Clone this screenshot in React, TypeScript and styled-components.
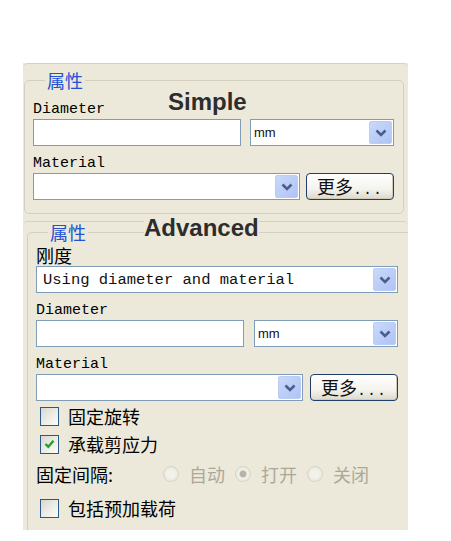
import styled, { createGlobalStyle } from 'styled-components';

const GlobalStyle = createGlobalStyle`
  html, body {
    margin: 0;
    padding: 0;
    background: #fff;
  }
  body {
    font-family: 'Noto Sans CJK SC', 'Liberation Sans', sans-serif;
    color: #000;
  }
`;

const beige = '#ece9da';

const Page = styled.div`
  width: 451px;
  height: 541px;
  padding: 63px 0 0 23px;
  box-sizing: border-box;
`;

const Panel = styled.div`
  width: 385px;
  background: ${beige};
`;

const Section = styled.div<{ $pad: number }>`
  position: relative;
  border-top: 1px solid #d6d2c1;
  border-radius: 5px 5px 0 0;
  padding-bottom: ${(p) => p.$pad}px;
`;

const SimpleGroup = styled.fieldset`
  margin: 7px 4px 0 1px;
  padding: 0 9px 13px 8px;
  border: 1px solid #d3d0bf;
  border-radius: 5px;
  min-width: 0;
`;

const AdvancedGroup = styled.fieldset`
  margin: 1px 0 0 4px;
  padding: 0 10px 8px 8px;
  border: 1px solid #d3d0bf;
  border-right: none;
  border-bottom: none;
  border-radius: 5px 0 0 0;
  min-width: 0;
`;

const Legend = styled.legend`
  margin-left: 12px;
  padding: 0 2px;
  font-size: 18px;
  line-height: 18px;
  color: #2352d4;
`;

const HeaderRow = styled.div`
  display: flex;
  align-items: flex-end;
  height: 30px;
`;

const Annotation = styled.span`
  font-family: 'Liberation Sans', Arial, sans-serif;
  font-weight: bold;
  font-size: 24px;
  line-height: 24px;
  color: #2d2d2d;
  background: ${beige};
`;

const SimpleTitle = styled(Annotation)`
  margin: 0 0 5px 63px;
`;

const AdvancedTitle = styled(Annotation)`
  position: absolute;
  top: -6px;
  left: 121px;
`;

const FieldLabel = styled.div<{ $gap: number }>`
  margin-top: ${(p) => p.$gap}px;
  font-family: 'Liberation Mono', monospace;
  font-size: 15px;
  line-height: 18px;
  color: #000;
  white-space: pre;
`;

const CjkLabel = styled.div`
  margin: 4px 0 1px;
  font-size: 18px;
  line-height: 20px;
  color: #000;
`;

const FieldRow = styled.div<{ $gap: number }>`
  display: flex;
  gap: ${(p) => p.$gap}px;
  height: 27px;
`;

const TextBox = styled.div`
  width: 208px;
  flex: none;
  box-sizing: border-box;
  border: 1px solid #7f9db9;
  background: #fff;
`;

const Select = styled.div<{ $mono?: boolean }>`
  flex: 1;
  display: flex;
  align-items: center;
  box-sizing: border-box;
  height: 27px;
  padding: 0 1px 0 ${(p) => (p.$mono ? 6 : 3)}px;
  border: 1px solid #7f9db9;
  background: #fff;
  font-family: ${(p) => (p.$mono ? "'Liberation Mono', monospace" : "'Liberation Sans', sans-serif")};
  font-size: ${(p) => (p.$mono ? 15.5 : 13)}px;
  color: #111;
  white-space: pre;
`;

const SelectText = styled.span`
  flex: 1;
  overflow: hidden;
`;

const DropButton = styled.span`
  width: 23px;
  height: 23px;
  flex: none;
  display: flex;
  align-items: center;
  justify-content: center;
  box-sizing: border-box;
  border: 1px solid #bccdf4;
  border-radius: 2px;
  background: linear-gradient(135deg, #c9d8fc, #afc4f4);
`;

const MoreButton = styled.button`
  width: 88px;
  flex: none;
  height: 27px;
  padding: 0;
  border: 1px solid #1f3f6a;
  border-radius: 4px;
  background: linear-gradient(#fff 0%, #f4f3ee 60%, #dcd9cc 100%);
  box-shadow: inset -1px -1px 0 #cfcbbb;
  font-family: 'Noto Sans CJK SC', sans-serif;
  font-size: 18px;
  line-height: 25px;
  color: #111;
`;

const Dots = styled.span`
  font-family: 'Liberation Mono', monospace;
  font-size: 15px;
  letter-spacing: 1px;
`;

const Options = styled.div`
  padding-top: 1px;
`;

const CheckRow = styled.label`
  display: flex;
  align-items: center;
  gap: 9px;
  height: 28px;
  padding-left: 4px;
  font-size: 18px;
  color: #000;
`;

const CheckBox = styled.span`
  width: 19px;
  height: 19px;
  box-sizing: border-box;
  flex: none;
  display: flex;
  align-items: center;
  justify-content: center;
  border: 1px solid #2a5a87;
  background: linear-gradient(135deg, #d7d6cf 0%, #eeede8 55%, #fbfbf9 100%);
`;

const RadioRow = styled.div`
  display: flex;
  align-items: center;
  height: 30px;
  margin: 1px 0 5px;
  font-size: 18px;
`;

const RadioLabel = styled.span`
  width: 127px;
  flex: none;
  color: #000;
`;

const RadioOption = styled.span`
  display: flex;
  align-items: center;
  gap: 10px;
  margin-right: 10px;
  color: #aca899;
`;

const RadioDot = styled.span<{ $on?: boolean }>`
  width: 16px;
  height: 16px;
  box-sizing: border-box;
  border-radius: 50%;
  border: 1px solid #d6d3c6;
  background: radial-gradient(circle, ${(p) => (p.$on ? '#b7b5aa 0, #b7b5aa 3px,' : '')} #f2f1ea 4px, #e3e1d6 100%);
`;

const Chevron = () => (
  <svg width="12" height="8" viewBox="0 0 12 8">
    <path d="M1.5 1.5 L6 6 L10.5 1.5" fill="none" stroke="#4b5d8a" strokeWidth="2.6" />
  </svg>
);

const Check = () => (
  <svg width="11" height="10" viewBox="0 0 11 10">
    <path d="M1.5 5 L4.3 7.8 L9.5 1.8" fill="none" stroke="#21a121" strokeWidth="2.4" />
  </svg>
);

const Dropdown = ({ text, mono }: { text?: string; mono?: boolean }) => (
  <Select $mono={mono}>
    <SelectText>{text}</SelectText>
    <DropButton>
      <Chevron />
    </DropButton>
  </Select>
);

const More = () => (
  <MoreButton>
    更多<Dots>...</Dots>
  </MoreButton>
);

const Option = ({ label, on }: { label: string; on?: boolean }) => (
  <RadioOption>
    <RadioDot $on={on} />
    {label}
  </RadioOption>
);

const App = () => {
  return (
    <Page>
      <GlobalStyle />
      <Panel>
        <Section $pad={7}>
          <SimpleGroup>
            <Legend>属性</Legend>
            <HeaderRow>
              <FieldLabel $gap={0}>Diameter</FieldLabel>
              <SimpleTitle>Simple</SimpleTitle>
            </HeaderRow>
            <FieldRow $gap={9}>
              <TextBox />
              <Dropdown text="mm" />
            </FieldRow>
            <FieldLabel $gap={9}>Material</FieldLabel>
            <FieldRow $gap={6}>
              <Dropdown />
              <More />
            </FieldRow>
          </SimpleGroup>
        </Section>

        <Section $pad={0}>
          <AdvancedTitle>Advanced</AdvancedTitle>
          <AdvancedGroup>
            <Legend>属性</Legend>
            <CjkLabel>刚度</CjkLabel>
            <FieldRow $gap={0}>
              <Dropdown mono text="Using diameter and material" />
            </FieldRow>
            <FieldLabel $gap={9}>Diameter</FieldLabel>
            <FieldRow $gap={10}>
              <TextBox />
              <Dropdown text="mm" />
            </FieldRow>
            <FieldLabel $gap={9}>Material</FieldLabel>
            <FieldRow $gap={7}>
              <Dropdown />
              <More />
            </FieldRow>
            <Options>
              <CheckRow>
                <CheckBox />
                固定旋转
              </CheckRow>
              <CheckRow>
                <CheckBox>
                  <Check />
                </CheckBox>
                承载剪应力
              </CheckRow>
              <RadioRow>
                <RadioLabel>固定间隔:</RadioLabel>
                <Option label="自动" />
                <Option label="打开" on />
                <Option label="关闭" />
              </RadioRow>
              <CheckRow>
                <CheckBox />
                包括预加载荷
              </CheckRow>
            </Options>
          </AdvancedGroup>
        </Section>
      </Panel>
    </Page>
  );
};

export default App;
